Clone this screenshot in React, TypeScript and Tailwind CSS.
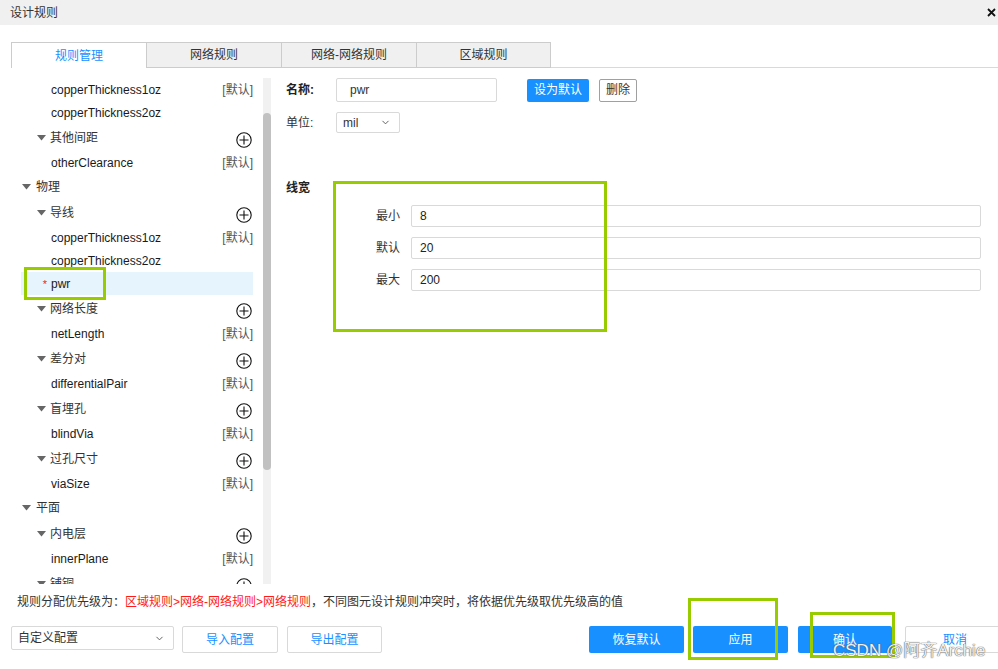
import { ChevronDown } from 'lucide-react';

type TreeRow = {
    kind: 'leaf' | 'group' | 'top';
    label: string;
    def?: boolean;
    star?: boolean;
    selected?: boolean;
};

const rows: TreeRow[] = [
    { kind: 'leaf', label: 'copperThickness1oz', def: true },
    { kind: 'leaf', label: 'copperThickness2oz' },
    { kind: 'group', label: '其他间距' },
    { kind: 'leaf', label: 'otherClearance', def: true },
    { kind: 'top', label: '物理' },
    { kind: 'group', label: '导线' },
    { kind: 'leaf', label: 'copperThickness1oz', def: true },
    { kind: 'leaf', label: 'copperThickness2oz' },
    { kind: 'leaf', label: 'pwr', star: true, selected: true },
    { kind: 'group', label: '网络长度' },
    { kind: 'leaf', label: 'netLength', def: true },
    { kind: 'group', label: '差分对' },
    { kind: 'leaf', label: 'differentialPair', def: true },
    { kind: 'group', label: '盲埋孔' },
    { kind: 'leaf', label: 'blindVia', def: true },
    { kind: 'group', label: '过孔尺寸' },
    { kind: 'leaf', label: 'viaSize', def: true },
    { kind: 'top', label: '平面' },
    { kind: 'group', label: '内电层' },
    { kind: 'leaf', label: 'innerPlane', def: true },
    { kind: 'group', label: '铺铜' },
];

const tabs = ['规则管理', '网络规则', '网络-网络规则', '区域规则'];

function Caret() {
    return (
        <svg width="9" height="6" viewBox="0 0 9 6" className="shrink-0">
            <polygon points="0,0 9,0 4.5,5.5" fill="#666" />
        </svg>
    );
}

function AddIcon() {
    return (
        <svg width="16" height="16" viewBox="0 0 16 16" className="shrink-0 mt-[4px]">
            <circle cx="8" cy="8" r="7.2" fill="none" stroke="#111" strokeWidth="1.1" />
            <path d="M3.5 8h9M8 3.5v9" stroke="#111" strokeWidth="1.1" />
        </svg>
    );
}

function Tree() {
    return (
        <div className="flex flex-col pl-[21px] pr-[10px]">
            {rows.map((r, i) => {
                if (r.kind === 'top') {
                    return (
                        <div key={i} className="h-[25px] flex items-center pl-[1px] text-[#333]">
                            <Caret />
                            <span className="ml-[5px]">{r.label}</span>
                        </div>
                    );
                }
                if (r.kind === 'group') {
                    return (
                        <div key={i} className="h-[27px] flex items-center pl-[16px] pr-[1px] text-[#333]">
                            <Caret />
                            <span className="ml-[4px] flex-1">{r.label}</span>
                            <AddIcon />
                        </div>
                    );
                }
                return (
                    <div
                        key={i}
                        className={`h-[23px] flex items-center text-[#1a1a1a] ${r.selected ? 'bg-[#e6f4fe]' : ''}`}
                    >
                        <span className="w-[30px] text-right pr-[4px] text-[#e8262b] text-[11px]">{r.star ? '*' : ''}</span>
                        <span className="flex-1">{r.label}</span>
                        {r.def && <span className="text-[#555]">[默认]</span>}
                    </div>
                );
            })}
        </div>
    );
}

function Select({ value, className }: { value: string; className: string }) {
    return (
        <div className={`flex items-center justify-between border border-[#d9d9d9] rounded-[2px] bg-white text-[#333] ${className}`}>
            <span>{value}</span>
            <ChevronDown size={11} strokeWidth={2} color="#555" />
        </div>
    );
}

export default function App() {
    return (
        <div
            className="w-[998px] h-[669px] bg-white relative overflow-hidden text-[12px] leading-[16px] text-[#333]"
            style={{ fontFamily: '"Liberation Sans", "Noto Sans CJK SC", sans-serif' }}
        >
            {/* title bar */}
            <div className="h-[25px] bg-[#f0f0f0] flex items-center justify-between pl-[10px] pr-[2px]">
                <span className="text-[#333]">设计规则</span>
                <svg width="9" height="9" viewBox="0 0 9 9">
                    <path d="M1 1l7 7M8 1l-7 7" stroke="#111" strokeWidth="1.8" />
                </svg>
            </div>

            {/* tabs */}
            <div className="flex pt-[17px] pl-[11px]">
                {tabs.map((t, i) => (
                    <div
                        key={t}
                        className={`w-[135px] h-[26px] flex items-center justify-center border-t border-[#cccccc] border-l ${
                            i === 3 ? 'border-r' : ''
                        } ${i === 0 ? 'bg-white text-[#1890ff]' : 'bg-[#f0f0f0] border-b text-[#333]'}`}
                    >
                        {t}
                    </div>
                ))}
                <div className="flex-1 border-b border-[#d9d9d9]" />
            </div>

            {/* body */}
            <div className="flex h-[516px]">
                <div className="w-[271px] pt-[10px] flex">
                    <div className="w-[263px] h-[506px] overflow-hidden">
                        <Tree />
                    </div>
                    <div className="w-[8px] h-[506px] bg-[#f1f1f1] pt-[35px]">
                        <div className="h-[357px] bg-[#c1c1c1] rounded-[4px]" />
                    </div>
                </div>

                <div className="flex-1 pt-[10px] pl-[15px] pr-[17px]">
                    <div className="flex items-center h-[24px]">
                        <span className="w-[50px] font-bold text-[#222]">名称:</span>
                        <div className="w-[161px] h-[24px] border border-[#d9d9d9] rounded-[2px] flex items-center pl-[13px] text-[#333]">
                            pwr
                        </div>
                        <div className="ml-[30px] w-[62px] h-[23px] bg-[#1890ff] text-white rounded-[2px] flex items-center justify-center">
                            设为默认
                        </div>
                        <div className="ml-[10px] w-[38px] h-[23px] border border-[#a0a0a0] rounded-[2px] flex items-center justify-center text-[#333]">
                            删除
                        </div>
                    </div>
                    <div className="flex items-center h-[21px] mt-[10px]">
                        <span className="w-[50px] text-[#333]">单位:</span>
                        <Select value="mil" className="w-[64px] h-[21px] pl-[6px] pr-[8px]" />
                    </div>

                    <div className="mt-[47px] font-bold text-[#222]">线宽</div>

                    <div className="mt-[9px] flex flex-col gap-[10px]">
                        {[
                            ['最小', '8'],
                            ['默认', '20'],
                            ['最大', '200'],
                        ].map(([k, v]) => (
                            <div key={k} className="flex items-center h-[22px]">
                                <span className="w-[114px] text-right text-[#333]">{k}</span>
                                <div className="ml-[11px] flex-1 h-[22px] border border-[#d9d9d9] rounded-[2px] flex items-center pl-[8px] text-[#222]">
                                    {v}
                                </div>
                            </div>
                        ))}
                    </div>
                </div>
            </div>

            {/* footer */}
            <div className="pt-[10px] pl-[17px] text-[#333]">
                规则分配优先级为：
                <span className="text-[#ff1a1a]">区域规则&gt;网络-网络规则&gt;网络规则</span>
                ，不同图元设计规则冲突时，将依据优先级取优先级高的值
            </div>
            <div className="flex items-start mt-[16px] pl-[11px]">
                <Select value="自定义配置" className="w-[163px] h-[24px] pl-[6px] pr-[8px] shrink-0" />
                <div className="ml-[8px] w-[96px] h-[27px] shrink-0 border border-[#d9d9d9] rounded-[2px] flex items-center justify-center text-[#1890ff]">
                    导入配置
                </div>
                <div className="ml-[9px] w-[95px] h-[27px] shrink-0 border border-[#d9d9d9] rounded-[2px] flex items-center justify-center text-[#1890ff]">
                    导出配置
                </div>
                <div className="ml-[207px] w-[95px] h-[27px] shrink-0 bg-[#1890ff] rounded-[2px] flex items-center justify-center text-white">
                    恢复默认
                </div>
                <div className="ml-[9px] w-[95px] h-[27px] shrink-0 bg-[#1890ff] rounded-[2px] flex items-center justify-center text-white">
                    应用
                </div>
                <div className="ml-[10px] w-[94px] h-[27px] shrink-0 bg-[#1890ff] rounded-[2px] flex items-center justify-center text-white">
                    确认
                </div>
                <div className="ml-[13px] w-[100px] h-[27px] shrink-0 border border-[#d9d9d9] rounded-[2px] flex items-center justify-center text-[#1890ff]">
                    取消
                </div>
            </div>

            {/* annotation boxes */}
            <div className="absolute left-[24px] top-[267px] w-[82px] h-[33px] border-[3px] border-[#99cc00]" />
            <div className="absolute left-[333px] top-[181px] w-[274px] h-[151px] border-[3px] border-[#99cc00]" />
            <div className="absolute left-[688px] top-[598px] w-[90px] h-[62px] border-[3px] border-[#99cc00]" />
            <div className="absolute left-[810px] top-[612px] w-[85px] h-[46px] border-[3px] border-[#99cc00]" />

            {/* watermark */}
            <div className="absolute left-[833px] top-[640px] text-[17px] leading-[22px] text-[#f2f2f2] [text-shadow:0_0_1px_#555,0_0_1px_#555] whitespace-nowrap">
                CSDN @阿齐Archie
            </div>
        </div>
    );
}
